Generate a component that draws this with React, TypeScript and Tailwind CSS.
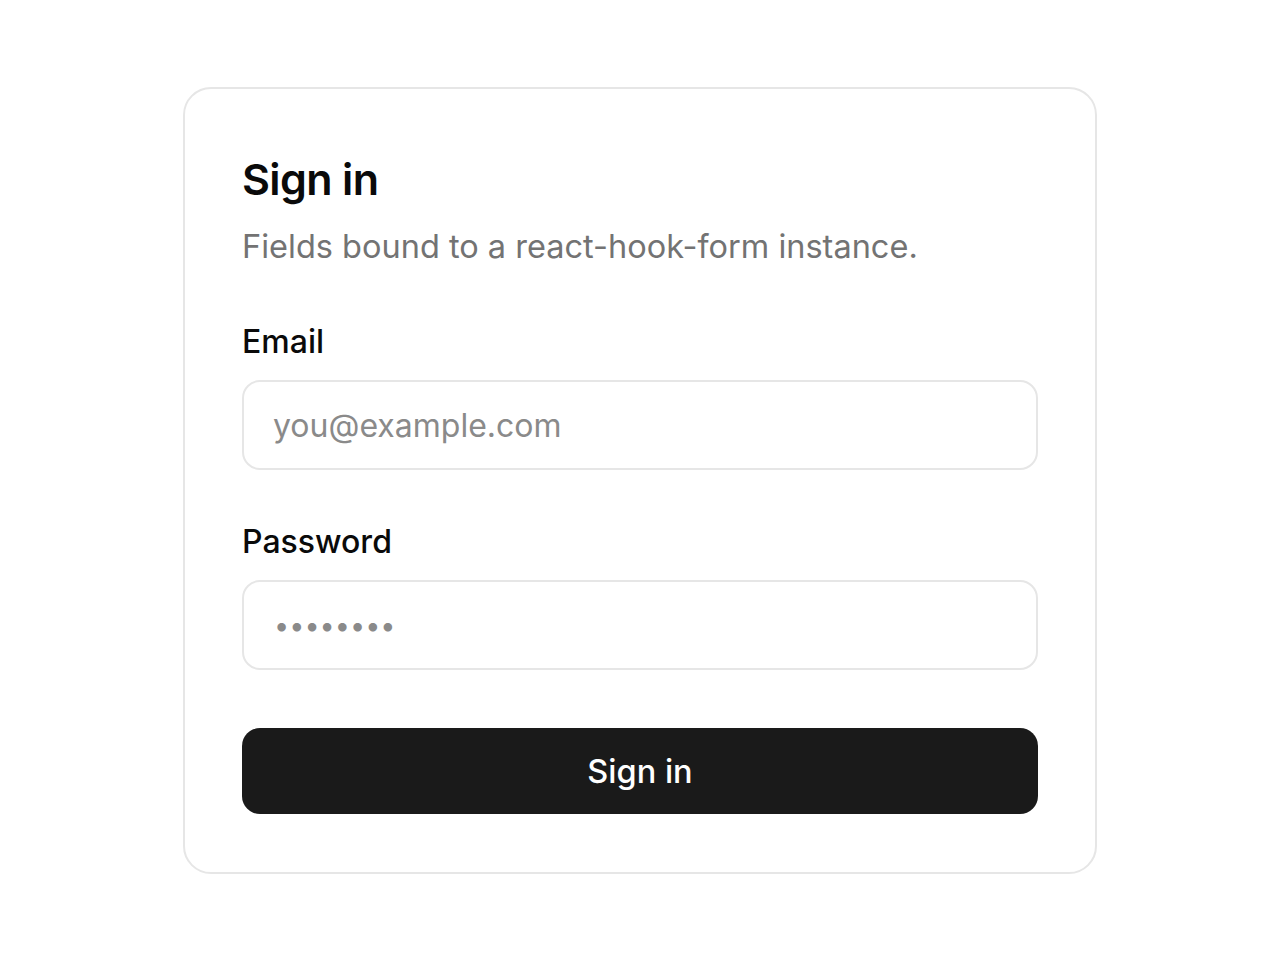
import React from 'react';

export default function App() {
    return (
        <div className="min-h-screen w-full bg-white flex justify-center pt-[87px]" style={{ fontFamily: 'Inter, "Noto Sans", sans-serif' }}>
            <div className="w-[914px] h-fit rounded-[28px] border-2 border-[#e6e6e6] bg-white px-[57px] pt-[62px] pb-[58px] flex flex-col">
                <h2 className="text-[43px] leading-[56px] font-semibold text-[#0a0a0a] tracking-[-0.015em]">Sign in</h2>
                <p className="mt-[20px] text-[32.5px] leading-[40px] text-[#737373]">Fields bound to a react-hook-form instance.</p>

                <form className="mt-[55px] flex flex-col" onSubmit={(e) => e.preventDefault()}>
                    {/* Email */}
                    <label className="flex flex-col">
                        <span className="text-[32px] leading-[40px] font-medium text-[#0a0a0a]">Email</span>
                        <input
                            type="email"
                            placeholder="you@example.com"
                            className="mt-[18px] h-[90px] w-full rounded-[18px] border-2 border-[#e6e6e6] bg-white px-[29px] text-[32px] text-[#0a0a0a] placeholder:text-[#8a8a8a] outline-none"
                        />
                    </label>

                    {/* Password */}
                    <label className="mt-[52px] flex flex-col">
                        <span className="text-[32px] leading-[40px] font-medium text-[#0a0a0a]">Password</span>
                        <input
                            type="password"
                            placeholder="••••••••"
                            className="mt-[18px] h-[90px] w-full rounded-[18px] border-2 border-[#e6e6e6] bg-white px-[30px] text-[27px] text-[#0a0a0a] placeholder:text-[#8a8a8a] outline-none"
                        />
                    </label>

                    <button
                        type="submit"
                        className="mt-[58px] h-[86px] w-full rounded-[18px] bg-[#1a1a1a] pt-[3px] text-white text-[32.5px] font-medium"
                    >
                        Sign in
                    </button>
                </form>
            </div>
        </div>
    );
}
